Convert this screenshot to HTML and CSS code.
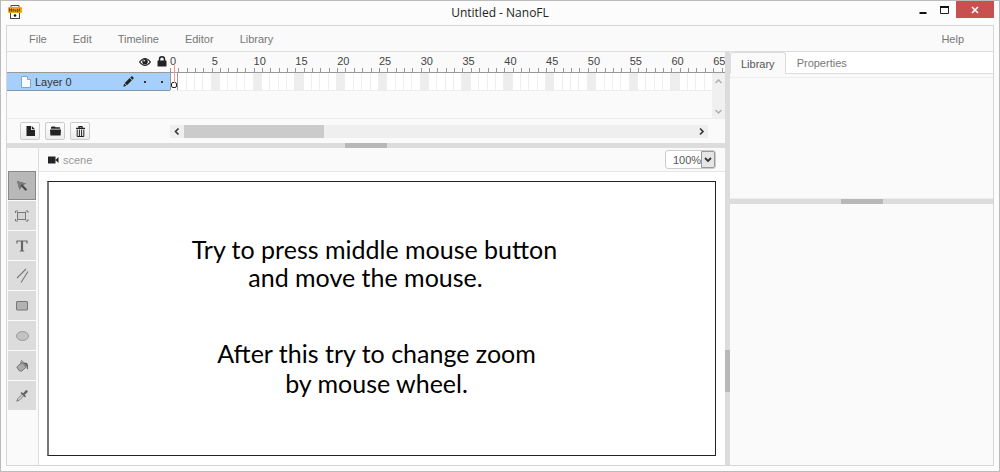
FILE: index.html
```html
<!DOCTYPE html>
<html lang="en">
<head>
<meta charset="utf-8">
<title>Untitled - NanoFL</title>
<link rel="stylesheet" href="styles.css">
</head>
<body>
<div class="window">
  <header class="titlebar">
    <svg class="app-icon" width="14" height="16" viewBox="0 0 14 16" aria-hidden="true">
      <path d="M3 2V.5h8V2M3 8v5.500h8V8" fill="#fff" stroke="#444"/>
      <rect x="2.500" y="7" width="9" height="6.500" fill="#fff" stroke="#444"/>
      <rect y="2" width="14" height="6" rx="1" fill="#f0a31c"/>
      <path d="M1.500 6.500v-3l2 3v-3M5 6.500v-2h1v2M7.500 6.500v-2M9 4.500h1v2H9zM11.500 6.500v-3" fill="none" stroke="#7a4a10"/>
      <circle cx="7" cy="10.500" r="1.300" fill="#111"/>
    </svg>
    <h1 class="title">Untitled - NanoFL</h1>
    <div class="window-buttons">
      <button class="win-btn" aria-label="Minimize"><svg width="8" height="10" viewBox="0 0 8 10"><path d="M.5 8h7" stroke="#111" stroke-width="2"/></svg></button>
      <button class="win-btn" aria-label="Maximize"><svg width="10" height="8" viewBox="0 0 10 8"><path d="M.5 1v6.500h8V1" fill="none" stroke="#222"/><path d="M0 1h9" stroke="#111" stroke-width="2"/></svg></button>
      <button class="win-btn win-close" aria-label="Close"><svg width="8" height="8" viewBox="0 0 8 8"><path d="M1 1l6 6M7 1L1 7" stroke="#fff" stroke-width="1.600"/></svg></button>
    </div>
  </header>

  <div class="client">
    <nav class="menubar">
      <button class="menu-item">File</button>
      <button class="menu-item">Edit</button>
      <button class="menu-item">Timeline</button>
      <button class="menu-item">Editor</button>
      <button class="menu-item">Library</button>
      <button class="menu-item menu-help">Help</button>
    </nav>

    <div class="workspace">
      <main class="left">
        <section class="timeline" aria-label="Timeline">
          <div class="timeline-head">
            <div class="layer-head">
              <svg width="12" height="10" viewBox="0 0 12 10"><path d="M.6 5Q6-2 11.400 5 6 12 .6 5z" fill="#fff" stroke="#222" stroke-width="1.200"/><circle cx="6" cy="4.700" r="2.800" fill="#222"/><circle cx="5.200" cy="3.800" r=".8" fill="#fff"/></svg>
              <svg width="10" height="11" viewBox="0 0 10 11"><path d="M2.500 5V3.300a2.500 2.500 0 0 1 5 0V5" fill="none" stroke="#222" stroke-width="1.500"/><rect x=".5" y="4.500" width="9" height="6" rx=".6" fill="#222"/></svg>
            </div>
            <div class="ruler"><div class="ruler-track" id="ruler"></div></div>
          </div>
          <div class="layers">
            <div class="layer-rows">
              <div class="layer-row">
                <div class="layer">
                  <svg width="10" height="12" viewBox="0 0 10 12"><path d="M.5.5h6l3 3v8h-9z" fill="#f8fcff" stroke="#7fa9c4"/><path d="M6.500.5v3h3" fill="#cfe6f5" stroke="#7fa9c4"/></svg>
                  <span class="layer-name">Layer 0</span>
                  <svg width="11" height="11" viewBox="0 0 11 11"><path d="M.3 10.700l.9-3.100 2.200 2.200zM1.800 7l4.900-4.900 2.200 2.200L4 9.200zM7.300 1.500L8.200.6q.7-.6 1.300 0l.9.9q.6.6 0 1.300l-.9.9z" fill="#222"/></svg>
                  <i class="dot"></i>
                  <i class="dot"></i>
                </div>
                <div class="frames"><div class="frame-track" id="frames"></div></div>
              </div>
            </div>
            <div class="vscroll">
              <svg width="7" height="5" viewBox="0 0 7 5"><path d="M.5 4l3-3 3 3" fill="none" stroke="#b0b0b0" stroke-width="1.500"/></svg>
              <svg width="7" height="5" viewBox="0 0 7 5"><path d="M.5 1l3 3 3-3" fill="none" stroke="#b0b0b0" stroke-width="1.500"/></svg>
            </div>
            <div class="playhead"></div>
          </div>
          <div class="timeline-foot">
            <div class="foot-buttons">
              <button class="tool-btn" aria-label="New layer"><svg width="9" height="10" viewBox="0 0 9 10"><path d="M.5 0H5v4h4v6H.5zM5.800 0L9 3.200H5.800z" fill="#222"/></svg></button>
              <button class="tool-btn" aria-label="New folder"><svg width="11" height="10" viewBox="0 0 11 10"><path d="M1 2.800V1.200L1.800.5h3l.8.8h4l.6.6v.9zM0 3.500h11L10.600 9.500H.4z" fill="#222"/></svg></button>
              <button class="tool-btn" aria-label="Delete"><svg width="9" height="11" viewBox="0 0 9 11"><path d="M0 2.300h9M3 2V.6h3V2" fill="none" stroke="#222" stroke-width="1.200"/><path d="M1.200 3.500v7h6.600v-7M3.400 3.500v7M5.600 3.500v7" fill="none" stroke="#222"/></svg></button>
            </div>
            <div class="hscroll">
              <svg width="14" height="13" viewBox="0 0 14 13"><path d="M8.500 3.500l-3 3 3 3" fill="none" stroke="#333" stroke-width="1.600"/></svg>
              <div class="hscroll-track"><div class="hscroll-thumb"></div></div>
              <svg width="14" height="13" viewBox="0 0 14 13"><path d="M6 3.500l3 3-3 3" fill="none" stroke="#333" stroke-width="1.600"/></svg>
            </div>
          </div>
        </section>
        <div class="splitter splitter-h"><i></i></div>
        <section class="editor">
          <aside class="tools" aria-label="Tools">
            <button class="tool active" aria-label="Select"><svg width="12" height="12" viewBox="0 0 12 12"><path d="M1 1l9 2.500-3 1.700L11 9.500 9.500 11 5.500 6.800 3.500 10z" fill="#666"/><path d="M1 1l9 2.500-5 1-1.500 5.500z" fill="#7c7c7c"/><path d="M5.500 5l5 5" stroke="#444" stroke-width="1.600"/></svg></button>
            <button class="tool" aria-label="Transform"><svg width="14" height="12" viewBox="0 0 14 12"><rect x="2.500" y="2.500" width="8" height="7" fill="#d4d4d4" stroke="#777"/><path d="M.5 3V1H3M10.500 1H13v2M13 9v2h-2.500M3 11H.5V9" fill="none" stroke="#777"/></svg></button>
            <button class="tool" aria-label="Text"><svg width="12" height="12" viewBox="0 0 12 12"><path d="M1 3.500V1h10v2.500M6 1v10M3.800 11h4.400" fill="none" stroke="#666" stroke-width="1.200"/><path d="M6 1v10" stroke="#666" stroke-width="2.200"/></svg></button>
            <button class="tool" aria-label="Line"><svg width="13" height="15" viewBox="0 0 13 15"><path d="M1 10l9-9M5 14.500L12 3.500" stroke="#777" stroke-width="1.100"/></svg></button>
            <button class="tool" aria-label="Rectangle"><svg width="12" height="10" viewBox="0 0 12 10"><rect x=".5" y=".5" width="11" height="8.500" rx=".5" fill="#b2b2b2" stroke="#777"/></svg></button>
            <button class="tool" aria-label="Oval"><svg width="13" height="10" viewBox="0 0 13 10"><ellipse cx="6.500" cy="5" rx="6" ry="4.500" fill="#c2c2c2" stroke="#999"/></svg></button>
            <button class="tool" aria-label="Fill"><svg width="13" height="12" viewBox="0 0 13 12"><path d="M.8 7L6 2.200l4 5.100-4.500 3.900-2.500-.6z" fill="#aaa" stroke="#777"/><path d="M5 4.500V1.300l1-.8 1 1v2.300" fill="none" stroke="#777"/><path d="M7 2.800q4.500-1 5 2.200v4.500q-1.500-.5-1.500-3L8 4z" fill="#666"/></svg></button>
            <button class="tool" aria-label="Eyedropper"><svg width="12" height="12" viewBox="0 0 12 12"><path d="M6.500 4L2 8.500l-1.200 2.700L3.500 10 8 5.500" fill="#ddd" stroke="#777"/><path d="M4.500 3l1.200-1 1.500 1.200L9.500.5q1-.8 1.800 0t.2 1.800L8.800 4.800 10 6.300 9 7.500z" fill="#666"/></svg></button>
          </aside>
          <div class="view">
            <div class="view-head">
              <svg width="11" height="8" viewBox="0 0 11 8"><path d="M0 .5h7.500v7H0zM7.500 4L10.500 1v6z" fill="#222"/></svg>
              <span class="scene">scene</span>
              <label class="zoom"><select aria-label="Zoom"><option>100%</option></select><span class="zoom-arrow"><svg width="8" height="6" viewBox="0 0 8 6"><path d="M1 1l3 3 3-3" fill="none" stroke="#333" stroke-width="1.800"/></svg></span></label>
            </div>
            <div class="stage-area">
              <div class="stage">
                <p class="stage-text">Try to press middle mouse button<br>and move the mouse.<span class="trail"></span></p>
                <p class="stage-text second">After this try to change zoom<br>by mouse wheel.</p>
              </div>
            </div>
          </div>
        </section>
      </main>
      <div class="splitter splitter-v"><i></i></div>
      <aside class="right">
        <section class="library">
          <div class="tabs">
            <button class="tab selected">Library</button>
            <button class="tab">Properties</button>
          </div>
          <div class="panel"></div>
        </section>
        <div class="splitter splitter-h"><i></i></div>
        <section class="preview"></section>
      </aside>
    </div>
  </div>
</div>
<script src="main.js"></script>
</body>
</html>
```
FILE: styles.css
```css
* { box-sizing: border-box; }
body {
  margin: 0;
  background: #fafafa;
  font: 11px/14px "Liberation Sans", Arial, sans-serif;
  color: #555;
}
button, select { font: inherit; color: inherit; }
button { border: 0; padding: 0; background: none; }
svg { display: block; flex: none; }

.window {
  min-height: 100vh;
  display: flex;
  flex-direction: column;
  padding: 0 5px 5px;
  border: 1px solid #bbb;
  background: #fcfcfc;
}
.titlebar {
  display: grid;
  grid-template-columns: 1fr auto 1fr;
  align-items: start;
  height: 24px;
}
.app-icon { margin: 4px 0 0 2px; }
.title {
  margin: 0;
  padding-top: 3px;
  font: 12px/18px "Open Sans", sans-serif;
  color: #222;
}
.window-buttons { display: flex; justify-content: flex-end; }
.win-btn {
  display: grid;
  place-items: center;
  width: 22px;
  height: 17px;
}
.win-close { width: 38px; background: #c75050; }

.client {
  flex: 1;
  display: flex;
  flex-direction: column;
  border: 1px solid #d6d6d6;
  background: #fafafa;
}
.menubar {
  display: flex;
  gap: 26px;
  height: 26px;
  padding: 0 29px 0 22px;
  border-bottom: 1px solid #ddd;
  color: #777;
}
.menu-help { margin-left: auto; }
.workspace { flex: 1; display: flex; }
.left { flex: 1; min-width: 0; display: flex; flex-direction: column; }
.right { width: 263px; display: flex; flex-direction: column; }

.splitter { display: flex; flex: none; background: #dcdcdc; justify-content: center; align-items: center; }
.splitter-h { height: 5px; }
.splitter-v { width: 5px; }
.splitter-h i { width: 42px; height: 5px; background: #b8b8b8; }
.splitter-v i { width: 5px; height: 42px; background: #b8b8b8; margin-top: 225px; }

.timeline-head { display: flex; height: 21px; border-bottom: 1px solid #999; }
.layer-head {
  width: 163px;
  display: flex;
  justify-content: flex-end;
  gap: 6px;
  padding: 4px 3px 0 0;
}
.layer-head svg:first-child { margin-top: 1px; }
.ruler { flex: 1; min-width: 0; overflow: hidden; }
.ruler-track { width: 585px; height: 20px; display: grid; grid-template-columns: repeat(70, 1fr); }
.tick {
  position: relative;
  border-left: 1px solid #999;
  height: 4px;
  align-self: end;
}
.tick span { position: absolute; left: -1px; bottom: 4px; color: #444; }

.layers { position: relative; display: flex; height: 46px; border-bottom: 1px solid #eee; }
.layer-rows { flex: 1; min-width: 0; }
.layer-row { display: flex; height: 18px; }
.layer {
  width: 163px;
  display: flex;
  align-items: center;
  padding: 0 7px 0 14px;
  background: #a6d0fb;
  border-bottom: 1px solid #8298ad;
  color: #333;
}
.layer-name { margin-left: 4px; flex: 1; }
.dot { width: 2px; height: 2px; background: #333; margin-left: 10px; }
.dot + .dot { margin-left: 15px; }
.frames { flex: 1; min-width: 0; overflow: hidden; border-bottom: 1px solid #eee; }
.frame-track { width: 585px; height: 17px; display: grid; grid-template-columns: repeat(70, 1fr); }
.frame { min-width: 0; border-right: 1px solid #eee; background: #fff; }
.frame:nth-child(5n+1) { background: #ededed; }
.frame.key {
  display: flex;
  align-items: flex-end;
  justify-content: center;
  padding-bottom: 2px;
  background: #fff;
  border: 1px solid #999;
  border-width: 0 1px;
}
.key i { flex: none; width: 6px; height: 6px; border: 1px solid #222; border-radius: 2px; }
.playhead { position: absolute; left: 167px; top: -9px; width: 1px; height: 19px; background: #f99; }
.vscroll {
  width: 13px;
  background: #f0f0f0;
  display: flex;
  flex-direction: column;
  justify-content: space-between;
  align-items: center;
  padding: 6px 0 4px;
}
.timeline-foot { display: flex; height: 24px; align-items: center; }
.foot-buttons { width: 163px; display: flex; gap: 5px; padding-left: 13px; }
.tool-btn {
  display: grid;
  place-items: center;
  width: 20px;
  height: 18px;
  border: 1px solid #ccc;
  border-radius: 2px;
  background: linear-gradient(#fff, #ececec);
}
.hscroll { flex: 1; display: flex; margin-right: 17px; background: #efefef; }
.hscroll-track { flex: 1; }
.hscroll-thumb { width: 140px; height: 13px; background: #cbcbcb; }

.editor { flex: 1; display: flex; }
.tools {
  width: 32px;
  display: flex;
  flex-direction: column;
  gap: 1px;
  padding: 23px 2px 0 0;
  border-right: 1px solid #ddd;
}
.tool {
  display: grid;
  place-items: center;
  height: 29px;
  margin-left: 1px;
  background: #dcdcdc;
}
.tool.active { background: #b8b8b8; border: 1px solid #888; }
.view { flex: 1; min-width: 0; display: flex; flex-direction: column; }
.view-head {
  display: flex;
  align-items: center;
  height: 24px;
  padding: 0 9px;
  border-bottom: 1px solid #e6e6e6;
  color: #999;
}
.scene { margin-left: 4px; }
.zoom {
  display: flex;
  margin-left: auto;
  width: 51px;
  height: 19px;
  border: 1px solid #ccc;
  border-radius: 3px;
  background: #fff;
  color: #555;
}
.zoom select {
  appearance: none;
  flex: 1;
  min-width: 0;
  border: 0;
  padding: 0 0 0 7px;
  background: none;
}
.zoom-arrow {
  display: grid;
  place-items: center;
  width: 14px;
  border: 1px solid #999;
  border-radius: 0 2px 2px 0;
  background: #e6e6e6;
}
.stage-area { flex: 1; display: flex; padding: 9px 9px 9px 8px; background: #fff; }
.stage {
  flex: 1;
  padding: 53px 15px 0 0;
  border: 1px solid #222;
  border-left: 2px solid #777;
  background: #fff;
  text-align: center;
}
.stage-text {
  margin: 0;
  font: 25px/28px Lato, sans-serif;
  color: #000;
}
.trail { display: inline-block; width: 18px; }
.second { margin-top: 47px; padding-left: 4px; line-height: 30px; }

.tabs { display: flex; height: 22px; background: #fff; border-bottom: 1px solid #ddd; color: #777; }
.tab { padding: 1px 11px 0; }
.tab.selected {
  height: 22px;
  padding: 0 10px;
  border: 1px solid #ddd;
  border-bottom: 0;
  border-radius: 3px 3px 0 0;
  background: #fafafa;
  color: #555;
}
.panel { height: 122px; margin-top: 3px; border: 1px solid #eee; border-width: 1px 0; }
.library { height: 147px; }
.preview { flex: 1; }
```
FILE: main.js
```js
const FRAME_COUNT = 70;
const ruler = document.getElementById("ruler");
const frames = document.getElementById("frames");

for (let i = 0; i < FRAME_COUNT; i++) {
  const tick = document.createElement("div");
  tick.className = "tick";
  if (i % 5 === 0) {
    const label = document.createElement("span");
    label.textContent = i;
    tick.append(label);
  }
  ruler.append(tick);

  const frame = document.createElement("div");
  frame.className = i === 0 ? "frame key" : "frame";
  if (i === 0) frame.append(document.createElement("i"));
  frames.append(frame);
}
```
